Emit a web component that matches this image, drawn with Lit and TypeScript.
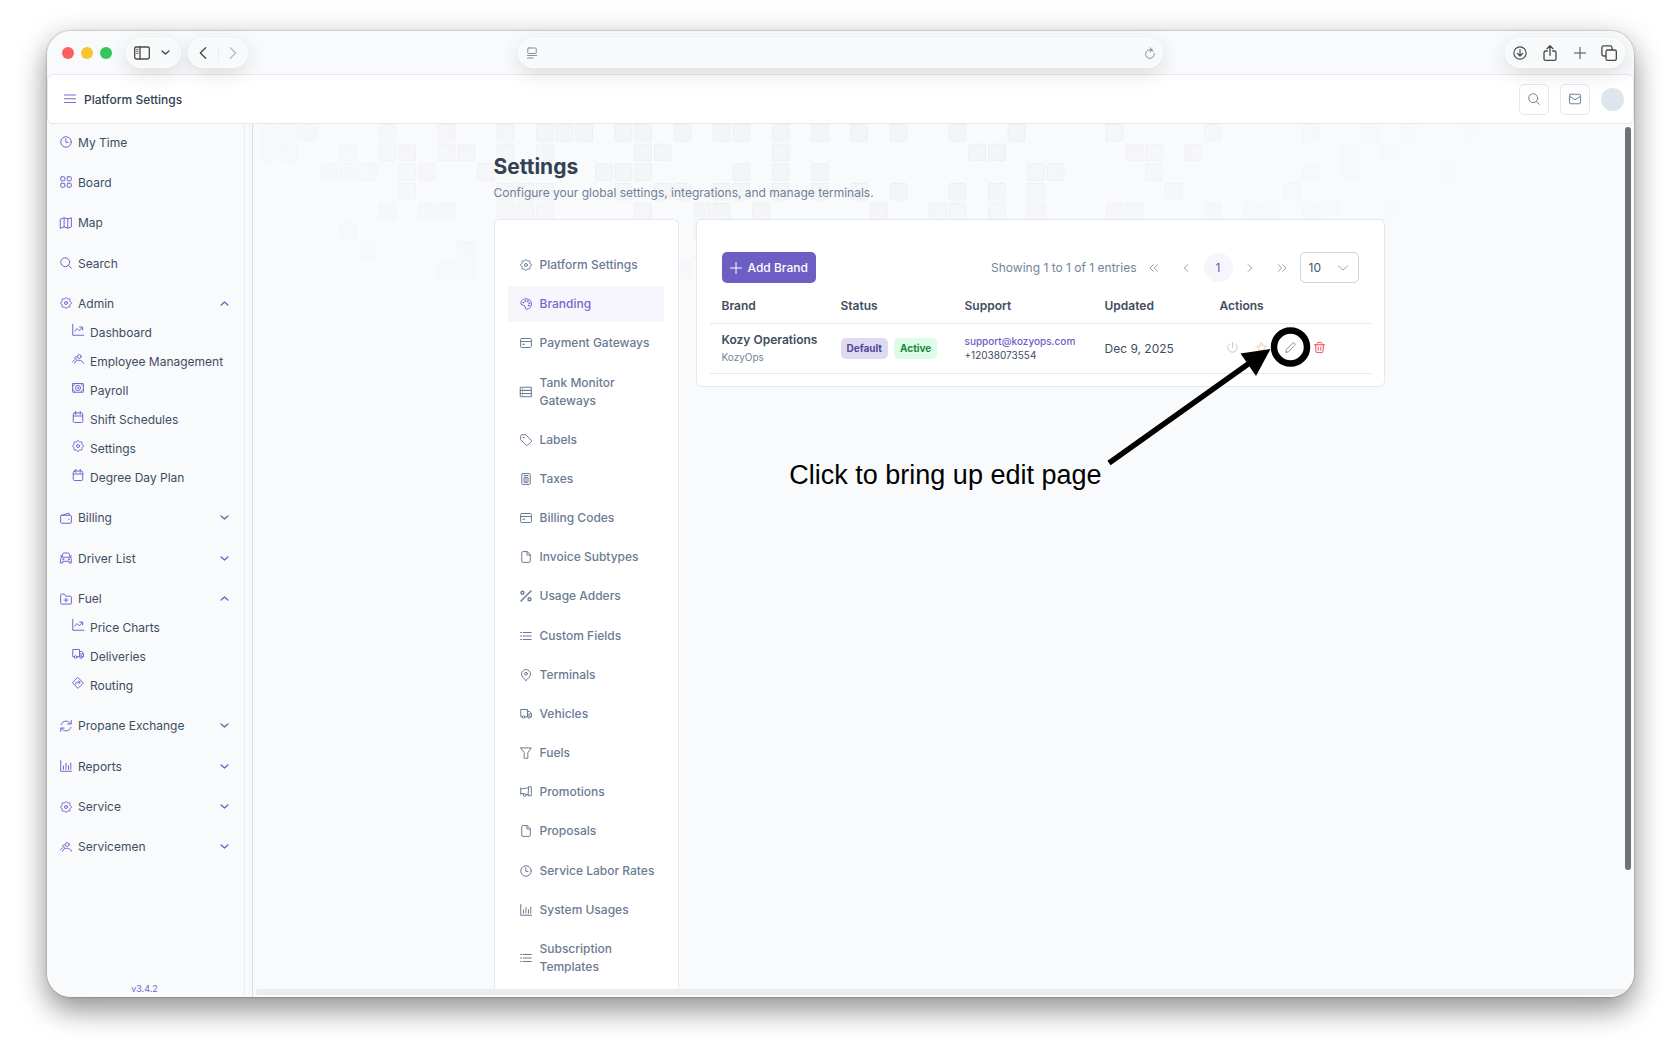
import { LitElement, html, svg, css } from "lit";
import { customElement, property, state } from "lit/decorators.js";
import { classMap } from "lit/directives/class-map.js";

/* Eight-lobed cog outline around the centre of a 24-unit box. */
const cogPath =
  Array.from({ length: 64 }, (_, i) => {
    const a = (i / 64) * Math.PI * 2;
    const r = 9.7 + 1.3 * Math.cos(8 * a);
    return `${i ? "L" : "M"}${(12 + r * Math.cos(a)).toFixed(2)} ${(12 + r * Math.sin(a)).toFixed(2)}`;
  }).join("") + "z";

const ICONS: Record<string, unknown> = {
  gear: svg`<path d=${cogPath}/><circle cx="12" cy="12" r="3"/>`,
  clock: svg`<circle cx="12" cy="12" r="10.5"/><path d="M11.6 5.5v7.2h4.6"/>`,
  grid: svg`<rect x="1.5" y="1.5" width="8" height="8" rx="1.6"/><rect x="14.5" y="1.5" width="8" height="8" rx="1.6"/><rect x="1.5" y="14.5" width="8" height="8" rx="1.6"/><rect x="14.5" y="14.5" width="8" height="8" rx="1.6"/>`,
  map: svg`<path d="M1.2 4.2l7-2.6 7.4 2 7.2-2v18l-7 2.8-7.4-2.6-7.2 2.6zM8.2 1.8v18M15.6 3.8v18.4"/>`,
  search: svg`<circle cx="10.4" cy="10.4" r="8.9"/><path d="M17 17l5.8 5.8"/>`,
  trend: svg`<path d="M1.5 .5v22h22M5.5 14.5l4.5-5.5 4.5 4.5 6-6.5M15.5 6h5.8v5.8"/>`,
  users: svg`<circle cx="14.500" cy="7" r="3.800"/><path d="M9.500 12.500a2.800 2.800 0 11-.6-5.200M5 20.500c1-4 4.200-6 8.800-6s7.700 2 9.200 6M1 18c.6-2 1.800-3.300 3.800-3.800"/>`,
  money: svg`<rect x="1.200" y="3" width="21.600" height="17.500" rx="1"/><ellipse cx="12" cy="11.800" rx="5" ry="5.400"/><circle cx="12" cy="11.800" r="1"/><path d="M1.500 7.500c3 0 4-1.500 4-4M22.500 7.500c-3 0-4-1.500-4-4M1.500 16c3 0 4 1.500 4 4M22.500 16c-3 0-4 1.500-4 4"/>`,
  calendar: svg`<rect x="2.500" y="4" width="19" height="19" rx="2.500"/><path d="M2.500 10h19M7.500 .8v6M16.500 .8v6"/>`,
  wallet: svg`<rect x="1.200" y="6.500" width="21.600" height="16" rx="2"/><path d="M2 7.500L17.500 2.200l1.500 4M17 14.500h1"/>`,
  car: svg`<path d="M3.500 10.500l2.200-7c.3-1 1-1.500 2-1.500h8.600c1 0 1.700.5 2 1.500l2.200 7M1.500 12.500c0-1.200.8-2 2-2h17c1.200 0 2 .8 2 2V22h-4v-3.500h-13V22h-4zM1 8h2.500M20.500 8H23"/><circle cx="6.500" cy="14.500" r="1"/><circle cx="17.500" cy="14.500" r="1"/>`,
  folder: svg`<path d="M1.200 4.500c0-1.400.8-2.200 2.200-2.200h5.200l3 4h9c1.400 0 2.200.8 2.200 2.200V20c0 1.400-.8 2.200-2.200 2.200H3.400c-1.400 0-2.200-.8-2.200-2.200zM12 10.500v7.500M8.200 14.200h7.600"/>`,
  truck: svg`<path d="M4.500 17.500H1.500V3H15v14.500H10M15 7h4.500l3.500 4.500v6h-1.800M15 12h8"/><circle cx="7.200" cy="18" r="2.600"/><circle cx="18.200" cy="18" r="2.600"/>`,
  route: svg`<path d="M12 1.200L22.800 12 12 22.800 1.200 12zM7.500 14.500V12c0-1 .5-1.500 1.500-1.500h7M13.500 7.500l3 3-3 3"/>`,
  refresh: svg`<path d="M2 9.500C3.500 5 7.500 2.200 12 2.200c4 0 7.200 2 9.200 5.300M22.500 1v7h-7M22 14.500c-1.500 4.500-5.500 7.300-10 7.300-4 0-7.200-2-9.200-5.300M1.500 23v-7h7"/>`,
  bars: svg`<path d="M1.500 1v21.500h21.500M7 18.500V12M12 18.500V7M17 18.500v-7M21.500 18.500V6"/>`,
  palette: svg`<path d="M2.500 12.500C-.5 8 4 1.500 12 1.500c6.500 0 11 4.500 11 10 0 6-4.500 11-10 11-3.500 0-1.200-4-3.200-6.200S4.200 15 2.500 12.500z"/><circle cx="6.500" cy="9" r="1"/><circle cx="10.500" cy="5.800" r="1"/><circle cx="15.500" cy="6.500" r="1"/><circle cx="18.500" cy="10.500" r="1"/><circle cx="17.500" cy="15" r="1"/>`,
  card: svg`<rect x="1.200" y="3" width="21.600" height="18" rx="2"/><path d="M1.200 9h21.600M5.500 14.500h4"/>`,
  server: svg`<rect x="1.200" y="2.500" width="21.600" height="6.300"/><rect x="1.200" y="8.800" width="21.600" height="6.300"/><rect x="1.200" y="15.100" width="21.600" height="6.300"/><path d="M5 5.700h.1M5 12h.1M5 18.200h.1"/>`,
  tag: svg`<path d="M1.500 3.500c0-1.200.8-2 2-2h8l11 11c.9.900.9 2 0 2.800l-7 7c-.9.900-2 .9-2.800 0L1.500 11.500z"/><circle cx="7" cy="7" r=".8"/>`,
  calc: svg`<rect x="3.500" y="1.200" width="17" height="21.600" rx="2"/><path d="M8 5h8M8 9.500v9h8v-9zM12 10v8.500"/>`,
  file: svg`<path d="M14 1.200H6C4.600 1.200 3.500 2 3.500 3.500v17c0 1.400 1 2.300 2.500 2.300h12c1.400 0 2.500-1 2.500-2.300V8zM14 1.200V8h6.500"/>`,
  percent: svg`<path d="M22 2L2 22" stroke-width="3"/><circle cx="5" cy="5.500" r="3" stroke-width="2.800"/><circle cx="19" cy="18.500" r="3" stroke-width="2.800"/>`,
  list: svg`<path d="M6.500 5h16M6.500 12h16M6.500 19h16M1.200 5h2M1.200 12h2M1.200 19h2"/>`,
  pin: svg`<path d="M12 23c-3-3.500-9-7.500-9-13a9 8.800 0 0118 0c0 5.500-6 9.500-9 13z"/><circle cx="12" cy="9.500" r="2.800"/>`,
  funnel: svg`<path d="M1.500 1.800h21l-6.800 9.700v11H8.300v-11z"/>`,
  horn: svg`<path d="M1.500 4v12.500M1.500 6L17 3.500M1.500 14.500L17 17.500M17 3.500V1.500h5.500v18H17zM6.500 15.800v2.200c0 3.800 6 3.800 6 0v-1"/>`,
  menu: svg`<path d="M1 4h22M1 11.500h22M1 19h22"/>`,
  mail: svg`<rect x="1.200" y="2.500" width="21.600" height="19" rx="1.500"/><path d="M1.500 7l10.500 6.500L22.500 7"/>`,
  plus: svg`<path d="M12 .8v22.400M.8 12h22.400"/>`,
  up: svg`<path d="M3 16l9-8 9 8"/>`,
  down: svg`<path d="M3 8l9 8 9-8"/>`,
  left: svg`<path d="M16 4l-8 8 8 8"/>`,
  right: svg`<path d="M8 4l8 8-8 8"/>`,
  left2: svg`<path d="M10.500 4l-8 8 8 8M20.500 4l-8 8 8 8"/>`,
  right2: svg`<path d="M3.500 4l8 8-8 8M13.500 4l8 8-8 8"/>`,
  power: svg`<path d="M12 1v11M6 4.200C3.300 5.800 1.800 8.800 1.800 12a10.200 10.200 0 0020.400 0c0-3.200-1.500-6.200-4.200-7.800"/>`,
  star: svg`<path d="M12 1.500l3.200 6.800 7.300 1-5.300 5.100 1.300 7.300-6.500-3.500-6.500 3.500 1.300-7.300L1.500 9.300l7.300-1z"/>`,
  pencil: svg`<path d="M2 22l1.200-6L16.800 2.400c1-1 2.600-1 3.600 0l1.200 1.200c1 1 1 2.600 0 3.600L8 20.800z"/>`,
  trash: svg`<path d="M.8 6h22.400M3.500 6l.8 15c0 1 .7 1.800 1.800 1.800h11.800c1 0 1.800-.8 1.800-1.800l.8-15M7 6V3c0-1.200.8-2 2-2h6c1.200 0 2 .8 2 2v3M9.200 11v7M14.800 11v7"/>`,
  sidebar: svg`<rect x="1" y="3" width="22" height="18" rx="2.500"/><path d="M9 3v18"/><path d="M3.500 6.500h3M3.500 9.500h3M3.500 12.500h3" stroke-width="1.200"/>`,
  reader: svg`<rect x="3.500" y="2" width="17" height="11" rx="1.500"/><path d="M3 17h18M3 22h11"/>`,
  reload: svg`<path d="M18.500 8.500A8.700 8.700 0 1020.500 13M12 1.500l4.500 4.200-4.500 4.300M16 5.700h-4"/>`,
  download: svg`<circle cx="12" cy="12" r="10.500"/><path d="M12 6v11M7.500 12.800L12 17.200l4.500-4.400"/>`,
  share: svg`<path d="M8 9H5.500C4.200 9 3 10 3 11.500v9C3 22 4.200 23 5.500 23h13c1.300 0 2.500-1 2.500-2.500v-9C21 10 19.800 9 18.500 9H16M12 15.500V1.500M7.500 5.500L12 1l4.500 4.500"/>`,
  tabs: svg`<rect x="7.500" y="7.500" width="15.500" height="15.500" rx="2.500"/><path d="M7 16.500H4c-1.600 0-2.700-1-2.700-2.700V4c0-1.600 1-2.700 2.700-2.700h9.800c1.600 0 2.700 1 2.700 2.700v3"/>`,
};

@customElement("ui-icon")
export class UiIcon extends LitElement {
  @property() name = "";
  static styles = css`
    :host {
      display: inline-flex;
      flex: none;
      width: 12px;
      height: 12px;
    }
    svg {
      width: 100%;
      height: 100%;
      overflow: visible;
      fill: none;
      stroke: currentColor;
      stroke-width: var(--icon-stroke, 2);
      stroke-linecap: round;
      stroke-linejoin: round;
    }
  `;
  render() {
    return html`<svg viewBox="0 0 24 24" aria-hidden="true">${ICONS[this.name]}</svg>`;
  }
}

interface NavItem {
  label: string;
  icon: string;
  group?: boolean;
  children?: { label: string; icon: string }[];
}

const NAV: NavItem[] = [
  { label: "My Time", icon: "clock" },
  { label: "Board", icon: "grid" },
  { label: "Map", icon: "map" },
  { label: "Search", icon: "search" },
  {
    label: "Admin",
    icon: "gear",
    group: true,
    children: [
      { label: "Dashboard", icon: "trend" },
      { label: "Employee Management", icon: "users" },
      { label: "Payroll", icon: "money" },
      { label: "Shift Schedules", icon: "calendar" },
      { label: "Settings", icon: "gear" },
      { label: "Degree Day Plan", icon: "calendar" },
    ],
  },
  { label: "Billing", icon: "wallet", group: true },
  { label: "Driver List", icon: "car", group: true },
  {
    label: "Fuel",
    icon: "folder",
    group: true,
    children: [
      { label: "Price Charts", icon: "trend" },
      { label: "Deliveries", icon: "truck" },
      { label: "Routing", icon: "route" },
    ],
  },
  { label: "Propane Exchange", icon: "refresh", group: true },
  { label: "Reports", icon: "bars", group: true },
  { label: "Service", icon: "gear", group: true },
  { label: "Servicemen", icon: "users", group: true },
];

const MENU: [string, string][] = [
  ["Platform Settings", "gear"],
  ["Branding", "palette"],
  ["Payment Gateways", "card"],
  ["Tank Monitor Gateways", "server"],
  ["Labels", "tag"],
  ["Taxes", "calc"],
  ["Billing Codes", "card"],
  ["Invoice Subtypes", "file"],
  ["Usage Adders", "percent"],
  ["Custom Fields", "list"],
  ["Terminals", "pin"],
  ["Vehicles", "truck"],
  ["Fuels", "funnel"],
  ["Promotions", "horn"],
  ["Proposals", "file"],
  ["Service Labor Rates", "clock"],
  ["System Usages", "bars"],
  ["Subscription Templates", "list"],
];

/* Filled cells of the decorative backdrop, listed by row. */
const CELLS: number[][] = [
  [0, 1, 2, 6, 9, 12, 14, 15, 16, 18, 19, 21, 23, 24, 26, 28, 30, 32, 35, 38, 43, 48, 53, 56, 58, 61],
  [0, 1, 4, 6, 7, 9, 10, 12, 14, 19, 20, 26, 36, 37, 44, 45, 47, 55, 57],
  [3, 4, 5, 7, 8, 11, 17, 18, 19, 24, 26, 28, 39, 40, 45, 53, 55, 60],
  [7, 12, 13, 14, 18, 20, 21, 23, 24, 26, 28, 30, 32, 35, 37, 39, 46, 52],
  [6, 8, 9, 12, 13, 14, 19, 22, 23, 25, 31, 34, 35, 37, 39, 43, 44, 48, 50, 51, 53, 54, 57],
  [4, 22],
  [5, 10],
  [9, 10, 21],
];
const STEP = 19.65;

@customElement("app-root")
export class AppRoot extends LitElement {
  @state() private active = "Branding";

  static styles = css`
    :host {
      display: flex;
      box-sizing: border-box;
      min-height: 100vh;
      padding: 31px 46px 62px 47px;
      background: #fff;
      font-family: Inter, "Liberation Sans", sans-serif;
      font-size: 12px;
      line-height: 18px;
      color: #3f4d61;
    }
    * {
      box-sizing: border-box;
    }
    button,
    input,
    select {
      font: inherit;
      color: inherit;
      margin: 0;
      padding: 0;
      border: 0;
      background: none;
    }
    a {
      color: inherit;
      text-decoration: none;
    }
    h1,
    p {
      margin: 0;
    }
    ul {
      list-style: none;
      margin: 0;
      padding: 0;
    }
    .frame {
      flex: 1;
      min-width: 0;
      display: flex;
      border-radius: 24px;
      box-shadow: 0 0 2px rgba(0, 0, 0, 0.42), 0 14px 28px rgba(0, 0, 0, 0.36), 0 4px 34px rgba(0, 0, 0, 0.12);
    }
    .window {
      flex: 1;
      min-width: 0;
      display: flex;
      flex-direction: column;
      overflow: hidden;
      border-radius: 24px;
      background: #f8fafc;
    }

    /* browser toolbar */
    .chrome {
      display: grid;
      grid-template-columns: 1fr minmax(0, 645px) 1fr;
      align-items: center;
      height: 43px;
      padding: 0 9px;
      color: #4a4a4a;
      position: relative;
      z-index: 2;
    }
    .chrome-left {
      display: flex;
      align-items: center;
      padding-left: 6px;
    }
    .lights {
      display: flex;
      gap: 7px;
      margin-right: 14px;
    }
    .light {
      width: 12px;
      height: 12px;
      border-radius: 50%;
      background: #fe5f60;
    }
    .light.yellow {
      background: #fac42e;
    }
    .light.green {
      background: #35c65a;
    }
    .pill {
      display: flex;
      align-items: center;
      height: 30px;
      border: 1px solid #fff;
      border-radius: 15px;
      background: #f7f9fb;
      box-shadow: 0 6px 20px rgba(0, 0, 0, 0.12);
    }
    .pill button {
      display: flex;
      align-items: center;
      justify-content: center;
    }
    .views {
      width: 55px;
      padding: 0 10px 0 7px;
      justify-content: space-between;
      margin-right: 7px;
    }
    .history {
      width: 60px;
    }
    .history button {
      flex: 1;
      height: 16px;
    }
    .history button + button {
      border-left: 1px solid #eceef0;
      color: #b9bbbe;
    }
    .i16 {
      width: 16px;
      height: 16px;
    }
    .i14 {
      width: 14px;
      height: 14px;
    }
    .i11 {
      width: 11px;
      height: 11px;
    }
    .i10 {
      width: 10px;
      height: 10px;
    }
    .i9 {
      width: 9px;
      height: 9px;
    }
    .bold {
      --icon-stroke: 4;
    }
    .address {
      padding: 0 6px 0 7px;
      color: #8b8d90;
    }
    .address input {
      flex: 1;
      min-width: 0;
      outline: 0;
    }
    .tools {
      justify-self: end;
      width: 120px;
      padding: 0 7px;
      justify-content: space-between;
    }

    /* application header */
    .header {
      display: flex;
      align-items: center;
      height: 50px;
      padding: 0 9px 0 16px;
      border: 1px solid #e3e9f0;
      border-radius: 6px;
      background: #fff;
      color: #334155;
      font-weight: 500;
    }
    .header .burger {
      display: flex;
      color: #7a68cf;
      margin-right: 8px;
    }
    .header .title {
      flex: 1;
      padding-top: 2px;
    }
    .square {
      display: flex;
      align-items: center;
      justify-content: center;
      width: 30px;
      height: 31px;
      margin-right: 11px;
      border: 1px solid #e2e8f0;
      border-radius: 5px;
      color: #70809a;
    }
    .avatar {
      width: 23px;
      height: 23px;
      border-radius: 50%;
      background: #dee5ef;
    }

    .body {
      flex: 1;
      min-height: 0;
      display: flex;
    }

    /* primary navigation */
    .side {
      display: flex;
      flex: none;
      width: 206px;
      padding-right: 2px;
      border-right: 1px solid #dcdaf3;
    }
    .side-inner {
      display: flex;
      flex: 1;
      padding-right: 4px;
      margin-bottom: 2px;
      border-right: 1px solid #eff1f4;
    }
    .side-col {
      flex: 1;
      display: flex;
      flex-direction: column;
      padding: 4px 15px 0 13px;
      border-right: 1px solid #ebedf0;
    }
    .nav {
      flex: 1;
      display: flex;
      flex-direction: column;
      justify-content: space-between;
      padding-bottom: 121px;
    }
    .row {
      display: flex;
      align-items: center;
      width: 100%;
      height: 29px;
      gap: 6px;
      text-align: left;
      white-space: nowrap;
    }
    .row ui-icon {
      color: #7565cd;
      margin-bottom: 1px;
    }
    .row .label {
      flex: 1;
    }
    .sub {
      padding-left: 12px;
    }
    .sub ui-icon {
      margin-bottom: 6px;
    }
    .version {
      height: 12px;
      text-align: center;
      font-size: 9px;
      line-height: 12px;
      color: #7565cd;
    }

    /* page */
    .main {
      flex: 1;
      min-width: 0;
      display: grid;
      grid-template-columns: minmax(0, 1fr) 6px;
      grid-template-rows: minmax(0, 1fr) 6px;
      padding: 0 3px 2px 0;
      position: relative;
    }
    .backdrop {
      position: absolute;
      left: 8px;
      top: 0;
      width: 1220px;
      height: 160px;
      fill: #f4f5f7;
      stroke: #edeff2;
      stroke-width: 1;
      -webkit-mask-image: radial-gradient(ellipse 700px 240px at 44% 0, #000 35%, transparent 100%);
      mask-image: radial-gradient(ellipse 700px 240px at 44% 0, #000 35%, transparent 100%);
    }
    .content {
      display: flex;
      flex-direction: column;
      width: 100%;
      max-width: 891px;
      margin: 0 auto;
      padding-top: 29px;
      position: relative;
    }
    h1 {
      font-size: 21px;
      line-height: 28px;
      font-weight: 700;
      color: #334155;
    }
    .lead {
      margin: 3px 0 17px;
      color: #708096;
    }
    .columns {
      flex: 1;
      display: grid;
      grid-template-columns: 185px minmax(0, 1fr);
      gap: 17px;
      align-items: start;
    }
    .menu {
      align-self: stretch;
      display: flex;
      flex-direction: column;
      justify-content: space-between;
      padding: 27px 14px 4px 13px;
      border: 1px solid #e6eaf0;
      border-bottom: 0;
      border-radius: 6px 6px 0 0;
      background: #fff;
    }
    .menu a {
      display: flex;
      align-items: center;
      gap: 8px;
      padding: 9px 4px 9px 12px;
      color: #6b7b93;
      font-weight: 500;
    }
    .menu a.active {
      background: #f7f6fc;
      color: #7766cf;
    }
    .card {
      position: relative;
      padding: 32px 13px 12px;
      border: 1px solid #e2e8f0;
      border-radius: 6px;
      background: #fff;
    }
    .bar {
      display: flex;
      align-items: center;
      justify-content: space-between;
      padding: 0 12px;
    }
    .add {
      display: flex;
      align-items: center;
      gap: 6px;
      height: 31px;
      padding: 0 8px;
      border-radius: 5px;
      background: #6d5ec3;
      color: #fff;
      font-weight: 500;
    }
    .pager {
      display: flex;
      align-items: center;
      gap: 3px;
      color: #75849a;
    }
    .pager button {
      display: flex;
      align-items: center;
      justify-content: center;
      width: 29px;
      height: 29px;
      border-radius: 50%;
      color: #8d9bb0;
      --icon-stroke: 2.4;
    }
    .pager button.current {
      background: #f6f5fb;
      color: #6455b4;
    }
    .size {
      display: flex;
      align-items: center;
      width: 59px;
      height: 31px;
      padding: 0 9px 0 8px;
      border: 1px solid #cbd5e1;
      border-radius: 5px;
      color: #94a3b8;
    }
    .size select {
      flex: 1;
      min-width: 0;
      appearance: none;
      color: #475569;
    }
    table {
      width: 100%;
      table-layout: fixed;
      border-collapse: separate;
      border-spacing: 0;
    }
    th,
    td {
      padding: 0 12px;
      text-align: left;
      border-bottom: 1px solid #e4e9ef;
      white-space: nowrap;
    }
    th {
      height: 41px;
      padding-top: 5px;
      font-weight: 600;
    }
    td {
      height: 50px;
    }
    .c1 {
      width: 119px;
    }
    .c2 {
      width: 124px;
    }
    .c3 {
      width: 140px;
    }
    .c4 {
      width: 115px;
    }
    .name {
      font-weight: 600;
      line-height: 18px;
    }
    .short {
      font-size: 10px;
      line-height: 16px;
      padding-bottom: 1px;
      color: #75849a;
    }
    .badges {
      display: flex;
      gap: 6px;
      padding-bottom: 1px;
    }
    .badge {
      height: 21px;
      padding: 0 6px;
      border-radius: 5px;
      font-size: 10px;
      line-height: 20px;
      font-weight: 700;
      background: #dedaf1;
      color: #54469c;
    }
    .badge.ok {
      background: #dcfce7;
      color: #1f8745;
    }
    .contact {
      font-size: 10px;
      line-height: 14px;
      padding-bottom: 2px;
    }
    .contact a {
      display: block;
      color: #6d5ec3;
      font-weight: 500;
    }
    .actions {
      display: flex;
      padding-bottom: 3px;
    }
    .actions button {
      display: flex;
      align-items: center;
      justify-content: center;
      width: 29px;
      height: 29px;
      color: #7a8699;
    }
    .actions .power {
      color: #bcc3ce;
    }
    .actions .star {
      color: #fdba8c;
    }
    .actions .trash {
      color: #f0444a;
    }
    td.act {
      padding-left: 10px;
    }

    /* tutorial callout drawn over the card */
    .callout {
      position: absolute;
      right: 73px;
      top: 107px;
      width: 206px;
      height: 140px;
      pointer-events: none;
    }
    .hint {
      position: absolute;
      right: 282px;
      top: 240px;
      font-family: "Liberation Sans", Arial, sans-serif;
      font-size: 27px;
      line-height: 30px;
      color: #000;
      white-space: nowrap;
    }

    .vbar {
      border-radius: 3px;
      background: #707173;
      margin: 3px 0 119px;
    }
    .hbar {
      grid-column: 1 / -1;
      margin-left: 3px;
      border-radius: 3px 0 0 3px;
      background: #ebecee;
    }
  `;

  private renderNav(item: NavItem) {
    const open = !!item.children;
    const head = item.group
      ? html`<button class="row" aria-expanded=${open ? "true" : "false"}>
          <ui-icon name=${item.icon}></ui-icon><span class="label">${item.label}</span>
          <ui-icon class="i9 bold" name=${open ? "up" : "down"}></ui-icon>
        </button>`
      : html`<a class="row" href="#"><ui-icon name=${item.icon}></ui-icon><span class="label">${item.label}</span></a>`;
    return html`<li>
      ${head}
      ${open
        ? html`<ul>
            ${item.children!.map(
              (c) => html`<li><a class="row sub" href="#"><ui-icon name=${c.icon}></ui-icon><span class="label">${c.label}</span></a></li>`
            )}
          </ul>`
        : null}
    </li>`;
  }

  render() {
    return html`
      <div class="frame"><div class="window">
        <div class="chrome">
          <div class="chrome-left">
            <div class="lights"><span class="light"></span><span class="light yellow"></span><span class="light green"></span></div>
            <div class="pill views">
              <button aria-label="Sidebar"><ui-icon class="i16" name="sidebar"></ui-icon></button>
              <button aria-label="Tab groups"><ui-icon class="i9 bold" name="down"></ui-icon></button>
            </div>
            <div class="pill history">
              <button aria-label="Back"><ui-icon class="i16" name="left"></ui-icon></button>
              <button aria-label="Forward"><ui-icon class="i16" name="right"></ui-icon></button>
            </div>
          </div>
          <div class="pill address">
            <ui-icon name="reader"></ui-icon>
            <input type="text" aria-label="Address" />
            <button aria-label="Reload"><ui-icon name="reload"></ui-icon></button>
          </div>
          <div class="pill tools">
            <button aria-label="Downloads"><ui-icon class="i14" name="download"></ui-icon></button>
            <button aria-label="Share"><ui-icon class="i16" name="share"></ui-icon></button>
            <button aria-label="New tab"><ui-icon name="plus"></ui-icon></button>
            <button aria-label="Tab overview"><ui-icon class="i16" name="tabs"></ui-icon></button>
          </div>
        </div>

        <header class="header">
          <button class="burger" aria-label="Menu"><ui-icon name="menu"></ui-icon></button>
          <span class="title">Platform Settings</span>
          <button class="square" aria-label="Search"><ui-icon name="search"></ui-icon></button>
          <button class="square" aria-label="Messages"><ui-icon name="mail"></ui-icon></button>
          <button class="avatar" aria-label="Account"></button>
        </header>

        <div class="body">
          <aside class="side"><div class="side-inner"><div class="side-col">
            <ul class="nav">
              ${NAV.map((i) => this.renderNav(i))}
            </ul>
            <div class="version">v3.4.2</div>
          </div></div></aside>

          <main class="main">
            <svg class="backdrop" aria-hidden="true">
              ${CELLS.map((row, r) =>
                row.map((c) => svg`<rect x=${c * STEP + 0.5} y=${r * STEP + 0.5} width="16.500" height="16.500" rx="1"/>`)
              )}
            </svg>
            <div class="content">
              <h1>Settings</h1>
              <p class="lead">Configure your global settings, integrations, and manage terminals.</p>
              <div class="columns">
                <nav class="menu" aria-label="Settings sections">
                  ${MENU.map(
                    ([label, icon]) => html`<a
                      href="#"
                      class=${classMap({ active: this.active === label })}
                      @click=${(e: Event) => {
                        e.preventDefault();
                        this.active = label;
                      }}
                      ><ui-icon name=${icon}></ui-icon><span>${label}</span></a
                    >`
                  )}
                </nav>
                <section class="card">
                  <div class="bar">
                    <button class="add"><ui-icon name="plus"></ui-icon>Add Brand</button>
                    <div class="pager">
                      <span>Showing 1 to 1 of 1 entries</span>
                      <button aria-label="First page"><ui-icon class="i10" name="left2"></ui-icon></button>
                      <button aria-label="Previous page"><ui-icon class="i10" name="left"></ui-icon></button>
                      <button class="current">1</button>
                      <button aria-label="Next page"><ui-icon class="i10" name="right"></ui-icon></button>
                      <button aria-label="Last page"><ui-icon class="i10" name="right2"></ui-icon></button>
                      <label class="size">
                        <select aria-label="Rows per page">
                          <option>10</option>
                        </select>
                        <ui-icon name="down"></ui-icon>
                      </label>
                    </div>
                  </div>
                  <table>
                    <thead>
                      <tr>
                        <th class="c1">Brand</th>
                        <th class="c2">Status</th>
                        <th class="c3">Support</th>
                        <th class="c4">Updated</th>
                        <th>Actions</th>
                      </tr>
                    </thead>
                    <tbody>
                      <tr>
                        <td><div class="name">Kozy Operations</div><div class="short">KozyOps</div></td>
                        <td><div class="badges"><span class="badge">Default</span><span class="badge ok">Active</span></div></td>
                        <td><div class="contact"><a href="mailto:support@kozyops.com">support@kozyops.com</a>+12038073554</div></td>
                        <td>Dec 9, 2025</td>
                        <td class="act">
                          <div class="actions">
                            <button class="power" aria-label="Disable"><ui-icon class="i11" name="power"></ui-icon></button>
                            <button class="star" aria-label="Make default"><ui-icon class="i11" name="star"></ui-icon></button>
                            <button aria-label="Edit"><ui-icon class="i11" name="pencil"></ui-icon></button>
                            <button class="trash" aria-label="Delete"><ui-icon class="i11" name="trash"></ui-icon></button>
                          </div>
                        </td>
                      </tr>
                    </tbody>
                  </table>
                  <svg class="callout" viewBox="0 0 206 140" aria-hidden="true">
                    <circle cx="185.500" cy="20" r="16.500" fill="none" stroke="#000" stroke-width="6.500" />
                    <path d="M4 136L146 35" stroke="#000" stroke-width="5.500" />
                    <path d="M165.500 22L135.500 26.500 151 49z" />
                  </svg>
                  <p class="hint">Click to bring up edit page</p>
                </section>
              </div>
            </div>
            <div class="vbar"></div>
            <div class="hbar"></div>
          </main>
        </div>
      </div></div>
    `;
  }
}
